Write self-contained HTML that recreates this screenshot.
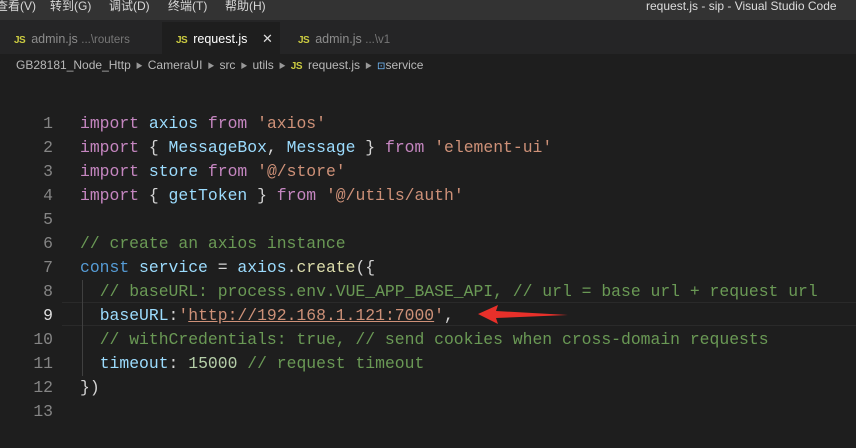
<!DOCTYPE html>
<html><head><meta charset="utf-8"><style>
*{margin:0;padding:0;box-sizing:border-box}
body{width:856px;height:415px;overflow:hidden;background:#1e1e1e;font-family:"Liberation Sans","Noto Sans CJK SC",sans-serif;position:relative}
.title{position:absolute;left:0;top:0;width:856px;height:20px;background:#333333;color:#d8d8d8;font-size:12px;line-height:13px}
.title span{position:absolute;top:0}
.tabs{position:absolute;left:0;top:20px;width:856px;height:34px;background:#252526}
.tab{position:absolute;top:2px;height:32px;line-height:34px;font-size:12.5px;color:#8c8c8c;padding-left:14px}
.tab.active{background:#1e1e1e;color:#fff}
.js{color:#cbcb41;font-weight:bold;font-size:10px;margin-right:6px;letter-spacing:-0.5px}
.dim{color:#777;font-size:11.5px}
.crumb{position:absolute;left:16px;top:58px;font-size:12px;color:#b8b8b8}
.tri{color:#999;font-size:7px;margin:0 5px;vertical-align:1px}
.code{position:absolute;left:0;top:112px;font-family:"Liberation Mono",monospace;font-size:16.4px;line-height:24px;color:#d4d4d4;white-space:pre}
.ln{position:absolute;left:0;width:53px;text-align:right;color:#858585}
.tx{position:absolute;left:80px}
.k{color:#c586c0}.v{color:#9cdcfe}.s{color:#ce9178}.c{color:#6a9955}.f{color:#dcdcaa}.n{color:#b5cea8}.b{color:#569cd6}
.hl{position:absolute;left:62px;top:302px;width:794px;height:24px;border-top:1px solid #2a2a2a;border-bottom:1px solid #2a2a2a}
.guide{position:absolute;left:82px;top:280px;width:1px;height:96px;background:#404040}
</style></head><body>
<div class="title">
<span style="left:-4px">查看(V)</span><span style="left:50px">转到(G)</span><span style="left:109px">调试(D)</span><span style="left:168px">终端(T)</span><span style="left:225px">帮助(H)</span>
<span style="left:646px;color:#ddd">request.js - sip - Visual Studio Code</span>
</div>
<div class="tabs">
<div class="tab" style="left:0;width:160px"><span class="js">JS</span>admin.js <span class="dim">...\routers</span></div>
<div class="tab active" style="left:162px;width:118px"><span class="js">JS</span>request.js<span style="position:absolute;left:100px;color:#ddd;font-size:13px">✕</span></div>
<div class="tab" style="left:284px;width:140px"><span class="js">JS</span>admin.js <span class="dim">...\v1</span></div>
</div>
<div class="crumb">GB28181_Node_Http<span class="tri">▶</span>CameraUI<span class="tri">▶</span>src<span class="tri">▶</span>utils<span class="tri">▶</span><span class="js">JS</span>request.js<span class="tri">▶</span><span style="color:#75beff;font-size:10px">⊡</span>service</div>
<div class="hl"></div>
<div class="guide"></div>
<div class="code">
<div class="ln" style="top:0">1</div><div class="tx" style="top:0"><span class="k">import</span> <span class="v">axios</span> <span class="k">from</span> <span class="s">'axios'</span></div>
<div class="ln" style="top:24px">2</div><div class="tx" style="top:24px"><span class="k">import</span> { <span class="v">MessageBox</span>, <span class="v">Message</span> } <span class="k">from</span> <span class="s">'element-ui'</span></div>
<div class="ln" style="top:48px">3</div><div class="tx" style="top:48px"><span class="k">import</span> <span class="v">store</span> <span class="k">from</span> <span class="s">'@/store'</span></div>
<div class="ln" style="top:72px">4</div><div class="tx" style="top:72px"><span class="k">import</span> { <span class="v">getToken</span> } <span class="k">from</span> <span class="s">'@/utils/auth'</span></div>
<div class="ln" style="top:96px">5</div>
<div class="ln" style="top:120px">6</div><div class="tx" style="top:120px"><span class="c">// create an axios instance</span></div>
<div class="ln" style="top:144px">7</div><div class="tx" style="top:144px"><span class="b">const</span> <span class="v">service</span> = <span class="v">axios</span>.<span class="f">create</span>({</div>
<div class="ln" style="top:168px">8</div><div class="tx" style="top:168px">  <span class="c">// baseURL: process.env.VUE_APP_BASE_API, // url = base url + request url</span></div>
<div class="ln" style="top:192px;color:#e0e0e0">9</div><div class="tx" style="top:192px">  <span class="v">baseURL</span>:<span class="s">'<u>http://192.168.1.121:7000</u>'</span>,</div>
<div class="ln" style="top:216px">10</div><div class="tx" style="top:216px">  <span class="c">// withCredentials: true, // send cookies when cross-domain requests</span></div>
<div class="ln" style="top:240px">11</div><div class="tx" style="top:240px">  <span class="v">timeout</span>: <span class="n">15000</span> <span class="c">// request timeout</span></div>
<div class="ln" style="top:264px">12</div><div class="tx" style="top:264px">})</div>
<div class="ln" style="top:288px">13</div>
</div>
<svg style="position:absolute;left:470px;top:302px" width="110" height="24" viewBox="0 0 110 24">
<path d="M8 12 L28 3 L26 9 L98 13 L26 16 L28 22 Z" fill="#e8302a"/>
</svg>
</body></html>
